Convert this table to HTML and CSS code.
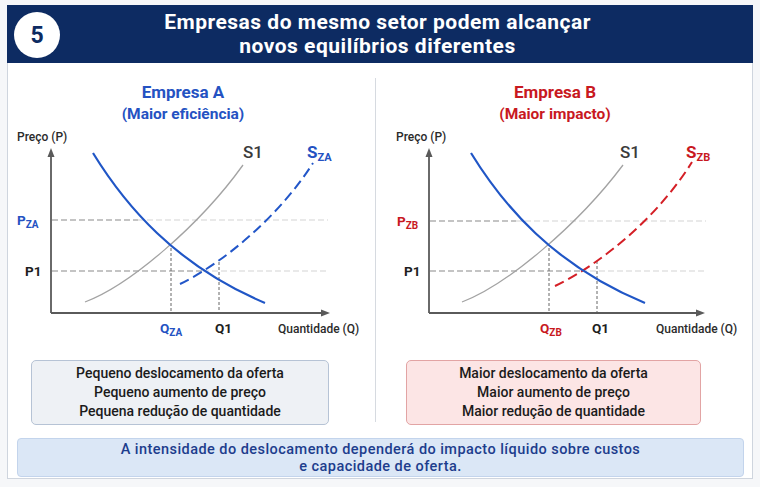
FILE: index.html
```html
<!DOCTYPE html>
<html lang="pt">
<head>
<meta charset="utf-8">
<title>Empresas do mesmo setor</title>
<link rel="stylesheet" href="styles.css">
</head>
<body>
<div class="card">
  <header class="head">
    <div class="badge">5</div>
    <h1 class="head-title">Empresas do mesmo setor podem alcançar<br>novos equilíbrios diferentes</h1>
  </header>
  <div class="cols">
    <section class="col col-a">
      <div class="ttl blue-t">
        <div class="ttl-main">Empresa A</div>
        <div class="ttl-sub">(Maior eficiência)</div>
      </div>
      <svg class="chart" width="367" height="210" viewBox="0 0 367 210">
        <text class="ax-title" x="9" y="13">Preço (P)</text>
        <line class="guide dark" x1="44" y1="92" x2="130" y2="92"/>
        <line class="guide light" x1="130" y1="92" x2="320" y2="92"/>
        <line class="guide dark" x1="44" y1="143" x2="195" y2="143"/>
        <line class="guide light" x1="195" y1="143" x2="320" y2="143"/>
        <line class="vguide" x1="163" y1="120" x2="163" y2="185"/>
        <line class="vguide" x1="211" y1="134" x2="211" y2="185"/>
        <path class="s1" d="M77,174 C122,157 192,97 235,37"/>
        <path class="s2 s2-blue" d="M172,156 C217,134 272,87 305,35"/>
        <path class="demand" d="M85,25 C117,77 167,137 257,175"/>
        <line class="axis" x1="43" y1="185" x2="43" y2="27"/>
        <line class="axis" x1="43" y1="185" x2="316" y2="185"/>
        <polygon class="arrow" points="43,20 39.5,29 46.5,29"/>
        <polygon class="arrow" points="322,185 313,181.5 313,188.5"/>
        <text class="lbl lbl-blue" x="9" y="97">P<tspan class="sub" dy="3">ZA</tspan></text>
        <text class="lbl" x="17" y="148">P1</text>
        <text class="lbl lbl-blue" x="152" y="205">Q<tspan class="sub" dy="3">ZA</tspan></text>
        <text class="lbl" x="207" y="205">Q1</text>
        <text class="ax-title" x="270" y="205">Quantidade (Q)</text>
        <text class="curve-lbl" x="235" y="30">S1</text>
        <text class="curve-lbl lbl-blue" x="299" y="30">S<tspan class="csub" dy="3">ZA</tspan></text>
      </svg>
      <div class="summary summary-a">
        <p>Pequeno deslocamento da oferta</p>
        <p>Pequeno aumento de preço</p>
        <p>Pequena redução de quantidade</p>
      </div>
    </section>
    <div class="divider"></div>
    <section class="col col-b">
      <div class="ttl red-t">
        <div class="ttl-main">Empresa B</div>
        <div class="ttl-sub">(Maior impacto)</div>
      </div>
      <svg class="chart" width="366" height="210" viewBox="0 0 366 210">
        <text class="ax-title" x="10" y="13">Preço (P)</text>
        <line class="guide dark" x1="44" y1="93" x2="130" y2="93"/>
        <line class="guide light" x1="130" y1="93" x2="320" y2="93"/>
        <line class="guide dark" x1="44" y1="143" x2="195" y2="143"/>
        <line class="guide light" x1="195" y1="143" x2="320" y2="143"/>
        <line class="vguide" x1="163" y1="120" x2="163" y2="185"/>
        <line class="vguide" x1="211" y1="133" x2="211" y2="185"/>
        <path class="s1" d="M76,174 C121,157 192,97 237,37"/>
        <path class="s2 s2-red" d="M169,158 C215,136 272,89 306,34"/>
        <path class="demand" d="M85,25 C117,77 167,137 259,175"/>
        <line class="axis" x1="43" y1="185" x2="43" y2="27"/>
        <line class="axis" x1="43" y1="185" x2="313" y2="185"/>
        <polygon class="arrow" points="43,20 39.5,29 46.5,29"/>
        <polygon class="arrow" points="319,185 310,181.5 310,188.5"/>
        <text class="lbl lbl-red" x="11" y="98">P<tspan class="sub" dy="3">ZB</tspan></text>
        <text class="lbl" x="18" y="148">P1</text>
        <text class="lbl lbl-red" x="154" y="205">Q<tspan class="sub" dy="3">ZB</tspan></text>
        <text class="lbl" x="206" y="205">Q1</text>
        <text class="ax-title" x="270" y="205">Quantidade (Q)</text>
        <text class="curve-lbl" x="234" y="30">S1</text>
        <text class="curve-lbl lbl-red" x="300" y="30">S<tspan class="csub" dy="3">ZB</tspan></text>
      </svg>
      <div class="summary summary-b">
        <p>Maior deslocamento da oferta</p>
        <p>Maior aumento de preço</p>
        <p>Maior redução de quantidade</p>
      </div>
    </section>
  </div>
  <div class="note">A intensidade do deslocamento dependerá do impacto líquido sobre custos<br>e capacidade de oferta.</div>
</div>
</body>
</html>
```

FILE: styles.css
```css
* { box-sizing: border-box; }
html, body { margin: 0; padding: 0; }
body {
  background: #f6f7f9;
  font-family: Roboto, "Liberation Sans", Arial, sans-serif;
  width: 760px;
  height: 487px;
  overflow: hidden;
}
.card {
  margin: 5px 0 0 7px;
  width: 746px;
  background: #ffffff;
  border: 1px solid #cfd5de;
  border-top: none;
  padding-bottom: 1px;
}
.head {
  position: relative;
  background: #0d2b62;
  height: 58px;
  margin: 0 -1px;
  padding: 5px 0;
}
.badge {
  position: absolute;
  left: 7px;
  top: 7px;
  width: 46px;
  height: 46px;
  border-radius: 50%;
  background: #ffffff;
  color: #0d2b62;
  font-weight: 700;
  font-size: 23px;
  display: flex;
  align-items: center;
  justify-content: center;
}
.head-title {
  margin: 0;
  color: #ffffff;
  font-size: 21px;
  font-weight: 700;
  letter-spacing: 0.5px;
  line-height: 24px;
  text-align: center;
  padding-right: 5px;
}
.cols {
  display: flex;
  align-items: flex-start;
}
.col {
  display: flex;
  flex-direction: column;
  padding-top: 18px;
}
.col-a { width: 367px; }
.col-b { width: 376px; }
.divider {
  width: 1px;
  height: 344px;
  margin-top: 15px;
  background: #d6dae0;
}
.ttl { text-align: center; font-weight: 700; }
.col-a .ttl { width: 350px; }
.col-b .ttl { width: 358px; }
.ttl-main { font-size: 17px; line-height: 22px; }
.ttl-sub { font-size: 15.5px; line-height: 22px; }
.blue-t { color: #2452c2; }
.red-t { color: #c8191f; }
.chart { display: block; margin-top: 3px; overflow: visible; }
.col-b .chart { margin-left: 10px; }
.ax-title { font-size: 12px; font-weight: 500; fill: #2b2b2b; }
.axis { stroke: #5a5a5a; stroke-width: 1.8; }
.arrow { fill: #5a5a5a; }
.guide { stroke-width: 1.1; stroke-dasharray: 6 3; }
.guide.dark { stroke: #8a8a8a; }
.guide.light { stroke: #d4d4d4; }
.vguide { stroke: #666; stroke-width: 1; stroke-dasharray: 3 2; }
.s1 { fill: none; stroke: #a3a3a3; stroke-width: 1.3; }
.s2 { fill: none; stroke-width: 2; stroke-dasharray: 10 5; }
.s2-blue { stroke: #2256c8; }
.s2-red { stroke: #d41f26; }
.demand { fill: none; stroke: #2056c6; stroke-width: 2.2; }
.lbl { font-size: 13.5px; font-weight: 700; fill: #1e1e1e; }
.lbl-blue { fill: #2452c2; }
.lbl-red { fill: #c8191f; }
.sub { font-size: 10px; }
.curve-lbl { font-size: 17px; font-weight: 500; fill: #3a3a3a; }
.curve-lbl.lbl-blue { fill: #2452c2; font-weight: 700; }
.curve-lbl.lbl-red { fill: #c8191f; font-weight: 700; }
.csub { font-size: 11px; }
.summary {
  margin-top: 22px;
  padding: 3px 0;
  border-radius: 5px;
  text-align: center;
  font-size: 14px;
  font-weight: 500;
  color: #1b1b1b;
}
.summary p { margin: 0; line-height: 19px; }
.summary-a {
  margin-left: 23px;
  width: 298px;
  background: #eef1f5;
  border: 1px solid #b6c3d5;
}
.summary-b {
  margin-left: 30px;
  width: 295px;
  background: #fce5e5;
  border: 1px solid #e2a4a4;
}
.note {
  margin: 13px 8px 0 9px;
  padding: 2px 0 1px;
  background: #dbe7f6;
  border: 1px solid #c3d4ec;
  border-radius: 4px;
  text-align: center;
  color: #1d3d8d;
  font-size: 14.5px;
  font-weight: 500;
  letter-spacing: 0.45px;
  line-height: 17px;
}
```
